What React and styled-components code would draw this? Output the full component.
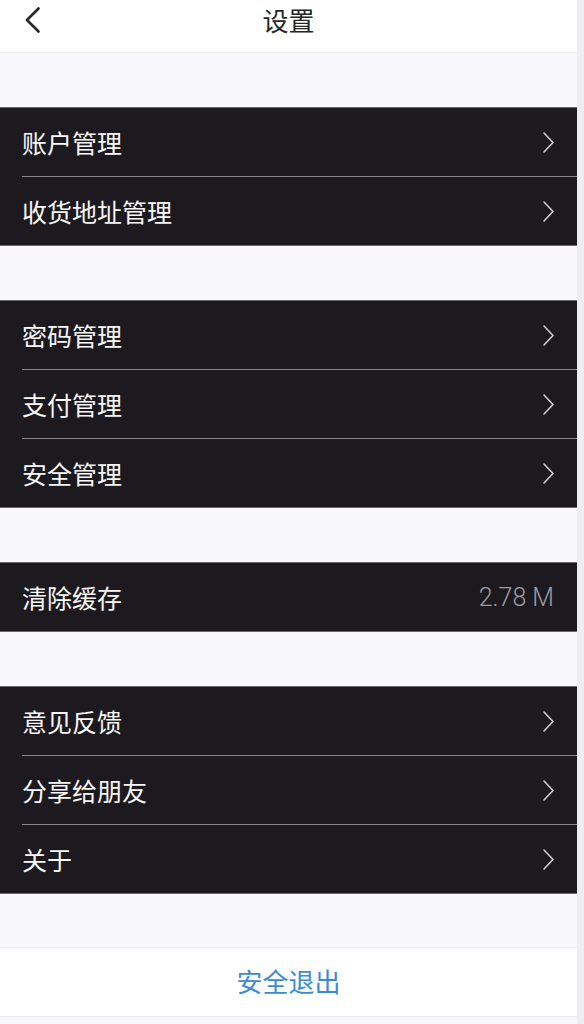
import React from "react"
import styled, { createGlobalStyle } from "styled-components"

const GlobalStyle = createGlobalStyle`
  html, body {
    margin: 0;
    padding: 0;
    background-color: #eeedf1;
  }
  body {
    font-family: "Noto Sans CJK SC", "Noto Sans", sans-serif;
  }
`

const StyledPage = styled('div')`
  width: 577px;
  min-height: 1024px;
  background-color: #f8f7fb;
`

const StyledHeader = styled('header')`
  position: relative;
  display: flex;
  align-items: center;
  justify-content: center;
  height: 40px;
  padding-bottom: 12px;
  background-color: #ffffff;
  border-bottom: 1px solid #ececf0;
`

const StyledBack = styled('div')`
  position: absolute;
  left: 25px;
  top: 7px;
  width: 15px;
  height: 26px;
`

const StyledTitle = styled('h1')`
  margin: 0;
  font-size: 26px;
  font-weight: 400;
  line-height: 40px;
  color: #262626;
`

const StyledGroup = styled('ul')`
  margin: 0;
  margin-top: 54px;
  padding: 0;
  list-style: none;
  background-color: #1d1a1f;
  border-top: 1px solid #6a686e;
  border-bottom: 1px solid #6a686e;
`

const StyledItem = styled('li')`
  padding-left: 22px;
`

const StyledRow = styled('div')`
  display: flex;
  align-items: center;
  justify-content: space-between;
  height: 68px;
  padding-right: 23px;
  border-bottom: ${props => props.last ? 'none' : '1px solid #87868b'};
`

const StyledLabel = styled('span')`
  font-size: 25px;
  font-weight: 400;
  line-height: 1;
  color: #f7f7f7;
`

const StyledValue = styled('span')`
  font-family: Roboto, "Liberation Sans", sans-serif;
  font-size: 25px;
  font-weight: 300;
  color: #9d9ca1;
`

const StyledLogout = styled('button')`
  display: flex;
  align-items: center;
  justify-content: center;
  width: 100%;
  height: 70px;
  margin-top: 53px;
  padding: 0 0 4px;
  background-color: #ffffff;
  border: none;
  border-top: 1px solid #ececf0;
  border-bottom: 1px solid #ececf0;
  font-family: "Noto Sans CJK SC", sans-serif;
  font-size: 26px;
  color: #3a8bd6;
`

function Chevron() {
  return (
    <svg width="11" height="21" viewBox="0 0 11 21" fill="none">
      <path d="M1 1 L10 10.5 L1 20" stroke="#cfced3" strokeWidth="1.6" strokeLinecap="round" strokeLinejoin="round" />
    </svg>
  )
}

const groups = [
  [{ label: '账户管理' }, { label: '收货地址管理' }],
  [{ label: '密码管理' }, { label: '支付管理' }, { label: '安全管理' }],
  [{ label: '清除缓存', value: '2.78 M' }],
  [{ label: '意见反馈' }, { label: '分享给朋友' }, { label: '关于' }],
]

function App() {
  return (
    <StyledPage>
      <GlobalStyle />
      <StyledHeader>
        <StyledBack>
          <svg width="15" height="26" viewBox="0 0 15 26" fill="none">
            <path d="M13.5 1.5 L2 13 L13.5 24.5" stroke="#262626" strokeWidth="2.6" strokeLinecap="round" strokeLinejoin="round" />
          </svg>
        </StyledBack>
        <StyledTitle>设置</StyledTitle>
      </StyledHeader>

      {groups.map((group, gi) => (
        <StyledGroup key={gi}>
          {group.map((item, i) => (
            <StyledItem key={item.label}>
              <StyledRow last={i === group.length - 1}>
                <StyledLabel>{item.label}</StyledLabel>
                {item.value ? <StyledValue>{item.value}</StyledValue> : <Chevron />}
              </StyledRow>
            </StyledItem>
          ))}
        </StyledGroup>
      ))}

      <StyledLogout>安全退出</StyledLogout>
    </StyledPage>
  )
}

export default App
